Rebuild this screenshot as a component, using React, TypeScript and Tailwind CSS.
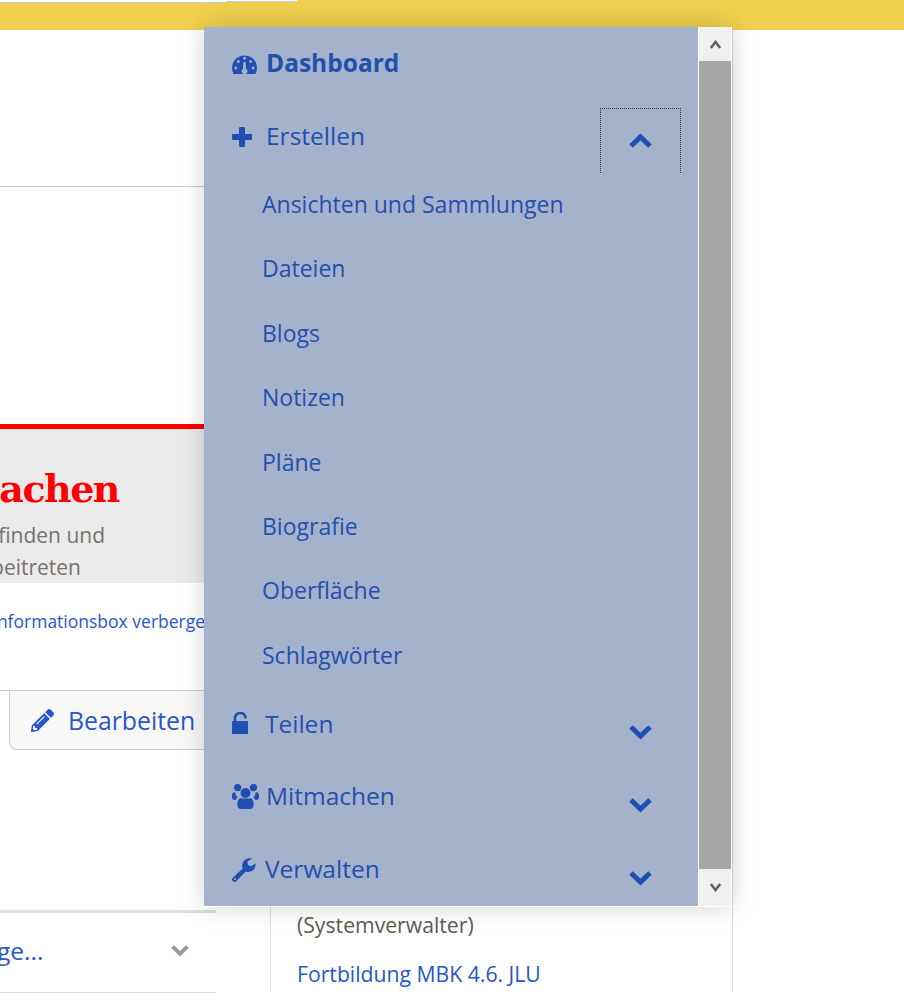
import { FaPencilAlt } from 'react-icons/fa';
import type { ReactNode } from 'react';

const subItems = ['Ansichten und Sammlungen', 'Dateien', 'Blogs', 'Notizen', 'Pläne', 'Biografie', 'Oberfläche', 'Schlagwörter'];

function Gauge() {
  return (
    <svg viewBox="0 0 25 20" className="w-[25px] h-[20px]" fill="#1f4fb2">
      <path d="M1.6 20 A12.5 12.5 0 1 1 23.4 20 Z" />
      <g fill="#a5b2cc">
        <circle cx="3.8" cy="14" r="1.5" />
        <circle cx="6.4" cy="7.4" r="1.5" />
        <circle cx="12.5" cy="4.2" r="1.5" />
        <circle cx="21.2" cy="14" r="1.5" />
        <circle cx="18.6" cy="7.4" r="1.5" />
        <path d="M11.4 8 h2.2 l0.5 7 a2.8 2.8 0 1 1 -3.2 0 Z" />
      </g>
    </svg>
  );
}

function Plus() {
  return (
    <svg viewBox="0 0 20 20" className="w-[20px] h-[20px]" fill="#1f4fb2">
      <path d="M8.2 0 H11.8 Q13 0 13 1.2 V7 H18.8 Q20 7 20 8.2 V11.8 Q20 13 18.8 13 H13 V18.8 Q13 20 11.8 20 H8.2 Q7 20 7 18.8 V13 H1.2 Q0 13 0 11.8 V8.2 Q0 7 1.2 7 H7 V1.2 Q7 0 8.2 0 Z" />
    </svg>
  );
}

function OpenLock() {
  return (
    <svg viewBox="0 0 17 22" className="w-[17px] h-[22px]" fill="#1f4fb2">
      <path d="M1 9 H15 Q16 9 16 10 V21 Q16 22 15 22 H1 Q0 22 0 21 V10 Q0 9 1 9 Z" />
      <path d="M3 10 V6 A5.2 5 0 0 1 13.4 6 V6.5" fill="none" stroke="#1f4fb2" strokeWidth="2.6" />
    </svg>
  );
}

function Wrench() {
  return (
    <svg viewBox="0 0 24 24" className="w-[24px] h-[24px]" fill="#1f4fb2">
      <path d="M23.4 5.6 L18.6 8.4 L15.6 6.6 V3.4 L20.2 0.6 C15.6 -0.8 10.6 2 10.2 7 C10.1 8.2 10.4 9.6 10.8 10.4 L1 19.6 C-0.4 21 -0.2 22.4 0.8 23.2 C1.8 24.2 3.2 24.2 4.4 23 L13.8 13.4 C18.8 15.4 24.6 11.4 23.4 5.6 Z" />
      <circle cx="2.9" cy="21" r="1" fill="#a5b2cc" />
    </svg>
  );
}

function People() {
  return (
    <svg viewBox="0 0 27 25" className="w-[27px] h-[25px]" fill="#1f4fb2">
      <circle cx="5.6" cy="3.6" r="3.6" />
      <circle cx="21.4" cy="3.6" r="3.6" />
      <path d="M0 11.5 C0 8.8 2 7.8 3.4 8.6 C3.6 11 4.6 12.6 5.8 13.6 C4.6 14.4 4 15.2 3.6 16 C1.4 16 0 15 0 13.4 Z" />
      <path d="M27 11.5 C27 8.8 25 7.8 23.6 8.6 C23.4 11 22.4 12.6 21.2 13.6 C22.4 14.4 23 15.2 23.4 16 C25.6 16 27 15 27 13.4 Z" />
      <circle cx="13.5" cy="9" r="5" />
      <path d="M7 15 C8.4 13.4 10 14.6 13.5 14.6 C17 14.6 18.6 13.4 20 15 C21.4 16.6 21.6 19 21.6 21 C21.6 23.6 20 25 17.8 25 H9.2 C7 25 5.4 23.6 5.4 21 C5.4 19 5.6 16.6 7 15 Z" />
    </svg>
  );
}

function Chevron({ up, color = '#1f4fb2', className = 'w-[23px] h-[15px]' }: { up?: boolean; color?: string; className?: string }) {
  return (
    <svg viewBox="0 0 23 15" className={className} fill="none" stroke={color} strokeWidth="5">
      <path d={up ? 'M2 13 L11.5 4 L21 13' : 'M2 2 L11.5 11 L21 2'} />
    </svg>
  );
}

function MenuRow({ icon, label, bold, iconClass = 'w-[34px]', rowClass = 'pb-[2px]', children }: { icon: ReactNode; label: string; bold?: boolean; iconClass?: string; rowClass?: string; children?: ReactNode }) {
  return (
    <div className={`h-[73px] flex items-center relative pl-[28px] text-[24.5px] ${rowClass}`}>
      <span className={`flex items-center ${iconClass}`}>{icon}</span>
      <span className={bold ? 'font-bold' : ''}>{label}</span>
      {children}
    </div>
  );
}

function Toggle({ open }: { open?: boolean }) {
  if (open) {
    return (
      <span className="absolute right-[17px] top-[8px] w-[81px] h-[65px] border-t border-x border-dotted border-[#333] flex items-center justify-center pb-[2px]">
        <Chevron up />
      </span>
    );
  }
  return (
    <span className="absolute right-[17px] top-[8px] w-[81px] h-[65px] flex items-center justify-center pt-[8px]">
      <Chevron />
    </span>
  );
}

function ScrollArrow({ up }: { up?: boolean }) {
  return (
    <svg viewBox="0 0 11 9" className="w-[11px] h-[9px]" fill="none" stroke="#5f5f5f" strokeWidth="2.6">
      <path d={up ? 'M0.8 8 L5.5 2 L10.2 8' : 'M0.8 1 L5.5 7 L10.2 1'} />
    </svg>
  );
}

export default function App() {
  return (
    <div className="relative w-[904px] h-[993px] overflow-hidden bg-white font-['Open_Sans',sans-serif]">
      <div className="h-[30px] bg-[#efd04e] flex items-start">
        <div className="w-[226px] h-[3px] bg-white border-b border-[#ccc]"></div>
        <div className="w-[71px] h-[2px] bg-white border-b border-[#ccc]"></div>
      </div>

      <div className="flex h-[963px]">
        <div className="w-[216px] shrink-0">
          <div className="h-[157px] border-b border-[#ccc]"></div>
          <div className="mt-[237px] border-t-[5px] border-[#f00] bg-[#ebebeb] h-[159px]">
            <div className="w-[119px] flex justify-end whitespace-nowrap pt-[34px] h-[84px] items-center text-[38px] font-bold text-[#f00] font-['DejaVu_Serif',serif] tracking-[-1.5px]">
              Mitmachen
            </div>
            <div className="w-[105px] flex justify-end whitespace-nowrap mt-[6px] pt-[2px] h-[32px] items-center text-[21px] text-[#77736e]">
              Gruppen finden und
            </div>
            <div className="w-[81px] flex justify-end whitespace-nowrap pt-[2px] h-[32px] items-center text-[21px] text-[#77736e]">
              Gruppen beitreten
            </div>
          </div>
          <div className="mt-[25px] ml-[-8px] h-[26px] flex items-center whitespace-nowrap text-[17.5px] text-[#2757cc]">
            Informationsbox verbergen
          </div>
          <div className="mt-[56px] h-[60px] border-t border-[#ccc] flex">
            <div className="ml-[9px] flex-1 flex items-center pl-[21px] gap-[14px] bg-[#f8f8f8] border-l border-b border-[#ccc] rounded-bl-lg text-[24.8px] text-[#2757cc]">
              <FaPencilAlt size={23} />
              <span className="pt-[2px]">Bearbeiten</span>
            </div>
          </div>
          <div className="mt-[160px] h-[83px] border-t-[3px] border-b border-t-[#ddd] border-b-[#ddd] flex items-center justify-between pr-[27px]">
            <span className="text-[24.5px] text-[#2757cc] whitespace-nowrap ml-[-3px] pb-[2px]">ge...</span>
            <Chevron color="#999" className="w-[18px] h-[12px] mb-[4px]" />
          </div>
        </div>

        <div className="ml-[54px] w-[463px] border-x border-[#ddd] h-full pl-[26px] pt-[880px] text-[21.2px]">
          <div className="text-[#5f5a52] leading-[30px]">(Systemverwalter)</div>
          <div className="text-[#2757cc] leading-[30px] mt-[19px] whitespace-nowrap">Fortbildung MBK 4.6. JLU</div>
        </div>
      </div>

      <div className="absolute left-[204px] top-[27px] w-[528px] h-[880px] flex bg-white shadow-[0_0_24px_rgba(0,0,0,0.18)]">
        <div className="w-[494px] h-[879px] bg-[#a5b2cc] text-[#2150ae] text-[23px]">
          <MenuRow icon={<Gauge />} label="Dashboard" bold rowClass="pb-0" />
          <MenuRow icon={<Plus />} label="Erstellen" rowClass="pb-0">
            <Toggle open />
          </MenuRow>
          <div className="flex flex-col">
            {subItems.map((item) => (
              <div key={item} className="h-[64.4px] flex items-center pl-[58px] pb-[2px]">{item}</div>
            ))}
          </div>
          <MenuRow icon={<OpenLock />} label="Teilen" iconClass="w-[33px] mb-[4px]" rowClass="pb-0">
            <Toggle />
          </MenuRow>
          <MenuRow icon={<People />} label="Mitmachen">
            <Toggle />
          </MenuRow>
          <MenuRow icon={<Wrench />} label="Verwalten" iconClass="w-[33px]">
            <Toggle />
          </MenuRow>
        </div>
        <div className="ml-[1px] w-[32px] h-[879px] flex flex-col bg-[#f0f0f0]">
          <div className="h-[34px] flex items-center justify-center"><ScrollArrow up /></div>
          <div className="flex-1 bg-[#a6a6a6]"></div>
          <div className="h-[37px] flex items-center justify-center"><ScrollArrow /></div>
        </div>
      </div>
    </div>
  );
}
